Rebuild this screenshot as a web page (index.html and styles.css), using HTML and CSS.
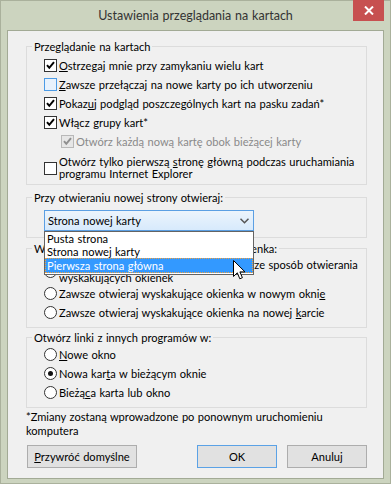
FILE: index.html
```html
<!DOCTYPE html>
<html lang="pl">
<head>
  <meta charset="UTF-8">
  <title>Ustawienia przeglądania na kartach</title>
  <link rel="stylesheet" href="styles.css">
</head>
<body>
  <div class="window">
    <div class="titlebar">
      <span></span>
      <div class="title">Ustawienia przeglądania na kartach</div>
      <div class="close">
        <svg width="10" height="9" viewBox="0 0 10 9"><path d="M1 0.5 L9 8.5 M9 0.5 L1 8.5" stroke="#fff" stroke-width="2" fill="none"/></svg>
      </div>
    </div>

    <div class="client">
      <fieldset class="group g1">
        <legend>Przeglądanie na kartach</legend>
        <div class="row"><span class="box"><svg class="tick" viewBox="0 0 11 11"><path d="M2 5.2 L4.3 7.8 L9 2.2"/></svg></span><span><u>O</u>strzegaj mnie przy zamykaniu wielu kart</span></div>
        <div class="row"><span class="box hover"></span><span><u>Z</u>awsze przełączaj na nowe karty po ich utworzeniu</span></div>
        <div class="row"><span class="box"><svg class="tick" viewBox="0 0 11 11"><path d="M2 5.2 L4.3 7.8 L9 2.2"/></svg></span><span>Pokaz<u>u</u>j podgląd poszczególnych kart na pasku zadań*</span></div>
        <div class="row"><span class="box"><svg class="tick" viewBox="0 0 11 11"><path d="M2 5.2 L4.3 7.8 L9 2.2"/></svg></span><span>Włącz <u>g</u>rupy kart*</span></div>
        <div class="row sub disabled"><span class="box"><svg class="tick" viewBox="0 0 11 11"><path d="M2 5.2 L4.3 7.8 L9 2.2"/></svg></span><span>Otwórz każdą nową kartę obok bieżącej karty</span></div>
        <div class="row multi"><span class="box"></span><span>Otwórz tylko pierwszą <u>s</u>tronę główną podczas uruchamiania<br>programu Internet Explorer</span></div>
      </fieldset>

      <fieldset class="group g2">
        <legend>Przy otwieraniu nowej strony otwieraj:</legend>
        <div class="combo">
          <div class="select">
            <span>Strona nowej karty</span>
            <svg width="9" height="6" viewBox="0 0 9 6"><path d="M0.5 0.8 L4.5 4.8 L8.5 0.8" stroke="#555" stroke-width="1.5" fill="none"/></svg>
          </div>
          <ul class="list">
            <li>Pusta strona</li>
            <li>Strona nowej karty</li>
            <li class="active">Pierwsza strona główna</li>
          </ul>
          <svg class="cursor" width="13" height="21" viewBox="0 0 13 21"><path d="M0.5 0.5 L0.5 16.5 L4.3 12.8 L6.8 18.8 L9.4 17.7 L6.9 11.9 L12 11.9 Z" fill="#fff" stroke="#000" stroke-width="1"/></svg>
        </div>
      </fieldset>

      <fieldset class="group g3">
        <legend>W przypadku napotkania wyskakującego okienka:</legend>
        <div class="row multi"><span class="radio"></span><span>Niech program Internet Explorer wybierze sposób otwierania<br>wyskakujących okienek</span></div>
        <div class="row"><span class="radio"></span><span>Zawsze otwieraj wyskakujące okienka w nowym okni<u>e</u></span></div>
        <div class="row"><span class="radio"></span><span>Zawsze otwieraj wyskakujące okienka na nowej <u>k</u>arcie</span></div>
      </fieldset>

      <fieldset class="group g4">
        <legend>Otwórz linki z innych programów w:</legend>
        <div class="row"><span class="radio"></span><span><u>N</u>owe okno</span></div>
        <div class="row"><span class="radio checked"></span><span>Nowa kar<u>t</u>a w bieżącym oknie</span></div>
        <div class="row"><span class="radio"></span><span>Bieżą<u>c</u>a karta lub okno</span></div>
      </fieldset>

      <p class="note">*Zmiany zostaną wprowadzone po ponownym uruchomieniu<br>komputera</p>

      <div class="buttons">
        <button class="btn wide"><u>P</u>rzywróć domyślne</button>
        <span class="spacer"></span>
        <button class="btn default">OK</button>
        <button class="btn">Anuluj</button>
      </div>
    </div>
  </div>
</body>
</html>
```

FILE: styles.css
```css
body {
  margin: 0;
  font-family: Lato, 'Noto Sans', sans-serif;
  font-size: 11.1px;
  word-spacing: 0.6px;
  color: #000;
}
.window {
  width: 391px;
  height: 484px;
  box-sizing: border-box;
  background: #ccd4bf;
  border: 1px solid #aab19c;
  padding: 0 6px;
}
.titlebar {
  height: 29px;
  display: grid;
  grid-template-columns: 1fr auto 1fr;
}
.title {
  align-self: center;
  font-size: 12.5px;
  color: #333;
  white-space: nowrap;
  padding-bottom: 1px;
}
.close {
  justify-self: end;
  width: 31px;
  height: 21px;
  margin-top: -1px;
  background: #c75050;
  display: flex;
  align-items: center;
  justify-content: center;
}
.client {
  height: 449px;
  box-sizing: border-box;
  background: #f0f0f0;
  border: 1px solid #a2aa95;
  padding: 8px 16px 0 18px;
  position: relative;
}
.group {
  margin: 0;
  padding: 0 0 0 17px;
  border: 1px solid #dcdcdc;
  min-width: 0;
}
.group legend {
  margin-left: -12px;
  padding: 0 2px;
  line-height: 15px;
}
.g1 { padding-top: 2px; padding-bottom: 4px; }
.g2 { margin-top: 5px; padding-top: 5px; padding-bottom: 6px; }
.g3 { margin-top: 3px; padding-bottom: 5px; }
.g4 { margin-top: 2px; padding-bottom: 5px; }

.row {
  display: flex;
  align-items: center;
  gap: 2px;
  height: 19px;
  white-space: nowrap;
}
.row.multi {
  height: auto;
  line-height: 12px;
  padding-top: 5px;
}
.g3 .row.multi {
  line-height: 13px;
  padding-top: 2px;
}
.row.sub {
  padding-left: 17px;
}
.row u, .btn u {
  text-underline-offset: 1px;
}
.box {
  width: 13px;
  height: 13px;
  box-sizing: border-box;
  border: 1px solid #333;
  background: #fff;
  flex: none;
  display: flex;
  align-items: center;
  justify-content: center;
}
.box.hover {
  border-color: #4c9be6;
  background: #e8f2fd;
}
.tick {
  width: 11px;
  height: 11px;
}
.tick path {
  stroke: #000;
  stroke-width: 2;
  fill: none;
}
.disabled {
  color: #8a8a8a;
}
.disabled .box {
  border-color: #b8b8b8;
  background: #e6e6e6;
}
.disabled .tick path {
  stroke: #8f8f8f;
}
.radio {
  width: 13px;
  height: 13px;
  box-sizing: border-box;
  border: 1px solid #333;
  border-radius: 50%;
  background: #fff;
  flex: none;
  display: flex;
  align-items: center;
  justify-content: center;
}
.radio.checked::after {
  content: "";
  width: 5px;
  height: 5px;
  border-radius: 50%;
  background: #111;
}

.combo {
  position: relative;
  width: 210px;
}
.select {
  height: 21px;
  box-sizing: border-box;
  border: 1px solid #5b9fe3;
  background: linear-gradient(#ecf4fc, #d7eafc);
  display: flex;
  align-items: center;
  justify-content: space-between;
  padding: 0 4px 0 3px;
}
.list {
  position: absolute;
  top: 21px;
  left: 0;
  width: 210px;
  box-sizing: border-box;
  margin: 0;
  padding: 0 0 1px;
  list-style: none;
  background: #fff;
  border: 1px solid #646464;
  z-index: 2;
}
.list li {
  height: 13px;
  line-height: 13px;
  padding-left: 2px;
  box-sizing: border-box;
}
.list li.active {
  height: 15px;
  line-height: 13px;
  background: #3399ff;
  color: #fff;
  border: 1px dotted #f0a040;
  padding-left: 1px;
}
.cursor {
  position: absolute;
  left: 189px;
  top: 50px;
  z-index: 3;
}

.note {
  margin: 2px 0 0;
  line-height: 14px;
}
.buttons {
  display: flex;
  gap: 10px;
  margin-top: 7px;
}
.spacer {
  flex: 1;
}
.btn {
  font-family: inherit;
  font-size: 11.1px;
  word-spacing: 0.6px;
  color: #000;
  height: 23px;
  width: 80px;
  border: 1px solid #adadad;
  background: #e1e1e1;
  padding: 0;
}
.btn.wide {
  width: 110px;
  margin-left: 1px;
}
.btn.default {
  border-color: #5ba2e6;
}
```
